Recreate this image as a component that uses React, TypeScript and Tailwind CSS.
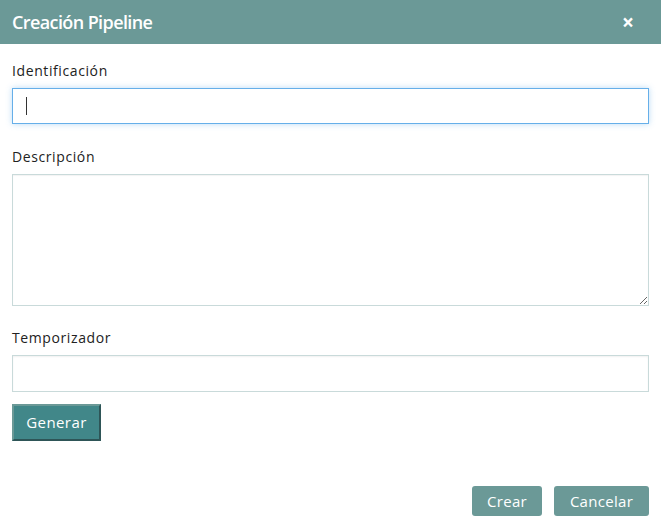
import React from "react";

export default function App() {
  return (
    <div className="w-[661px] h-[526px] bg-white flex flex-col" style={{ fontFamily: '"Open Sans", "Noto Sans", sans-serif' }}>
      <div className="h-[44px] bg-[#6b9997] flex items-center justify-between pl-[12px] pr-[27px] shrink-0">
        <span className="text-white text-[18px] font-semibold tracking-[-0.6px]">Creación Pipeline</span>
        <span className="text-white text-[21px] font-bold leading-none">×</span>
      </div>
      <div className="flex flex-col px-[12px] pt-[17px]">
        <label className="text-[14px] text-[#222] tracking-[0.6px] leading-[20px] h-[20px]">Identificación</label>
        <div className="mt-[7px] h-[36px] border border-[#66afe9] shadow-[0_0_6px_rgba(102,175,233,0.45)] flex items-center pl-[13px]">
          <div className="w-px h-[18px] bg-[#333]" />
        </div>
        <label className="mt-[23px] text-[14px] text-[#222] tracking-[0.6px] leading-[20px] h-[20px]">Descripción</label>
        <textarea className="mt-[7px] h-[132px] border border-[#c9dada] resize-y outline-none shadow-[inset_0_1px_1px_rgba(0,0,0,0.05)]" />
        <label className="mt-[22px] text-[14px] text-[#222] tracking-[0.6px] leading-[20px] h-[20px]">Temporizador</label>
        <div className="mt-[7px] h-[37px] border border-[#c9dada] shadow-[inset_0_1px_2px_rgba(0,0,0,0.06)] shrink-0" />
        <div className="mt-[12px]">
          <button className="w-[89px] h-[37px] bg-[#418789] text-white text-[15px] tracking-[0.4px] border-2 border-t-[#6b9997] border-l-[#6b9997] border-b-[#2e5557] border-r-[#2e5557]">
            Generar
          </button>
        </div>
        <div className="mt-[45px] flex justify-end gap-[12px]">
          <button className="w-[70px] h-[30px] rounded-[3px] bg-[#6b9997] text-white text-[15px] tracking-[0.3px]">Crear</button>
          <button className="w-[95px] h-[30px] rounded-[3px] bg-[#6b9997] text-white text-[15px] tracking-[0.3px]">Cancelar</button>
        </div>
      </div>
    </div>
  );
}
